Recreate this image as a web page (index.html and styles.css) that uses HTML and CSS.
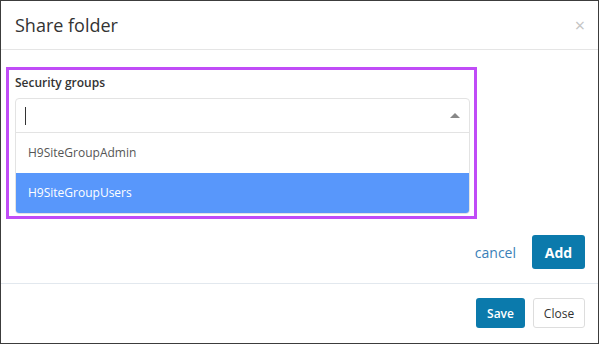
FILE: index.html
```html
<!DOCTYPE html>
<html lang="en">
<head>
    <meta charset="UTF-8">
    <title>Share folder</title>
    <link rel="stylesheet" href="styles.css">
</head>
<body>
    <div class="modal">
        <div class="modal-header">
            <h4 class="modal-title">Share folder</h4>
            <span class="close">&times;</span>
        </div>

        <div class="modal-body">
            <div class="destaque">
                <label class="rotulo">Security groups</label>
                <div class="select-box">
                    <div class="select-input">
                        <span class="cursor"></span>
                        <span class="seta"></span>
                    </div>
                    <ul class="opcoes">
                        <li>H9SiteGroupAdmin</li>
                        <li class="ativo">H9SiteGroupUsers</li>
                    </ul>
                </div>
            </div>
            <div class="acoes">
                <a href="#" class="link-cancel">cancel</a>
                <button class="btn btn-add">Add</button>
            </div>
        </div>

        <div class="modal-footer">
            <button class="btn btn-save">Save</button>
            <button class="btn btn-close">Close</button>
        </div>
    </div>
</body>
</html>
```
FILE: styles.css
```css
html, body {
    margin: 0;
    height: 100%;
}

body {
    font-family: "Open Sans", Arial, sans-serif;
    background-color: #fff;
    color: #333;
}

.modal {
    height: 100%;
    box-sizing: border-box;
    border: 1px solid #3c3c3c;
    display: flex;
    flex-direction: column;
}

.modal-header {
    height: 48px;
    border-bottom: 1px solid #e5e5e5;
    display: flex;
    align-items: center;
    justify-content: space-between;
    padding: 0 13px 0 14px;
}

.modal-title {
    margin: 0;
    font-size: 18px;
    font-weight: normal;
    color: #333;
}

.close {
    font-size: 18px;
    color: #c4c4c4;
    line-height: 1;
}

.modal-body {
    padding: 17px 13px 14px 5px;
    border-bottom: 1px solid #e2e8ee;
}

.destaque {
    width: 455px;
    height: 146px;
    border: 3px solid #c04cf7;
    padding: 0 4px 0 6px;
    box-sizing: content-box;
}

.rotulo {
    display: block;
    font-size: 12px;
    font-weight: 600;
    color: #333;
    margin-top: 4px;
    height: 24px;
}

.select-box {
    width: 455px;
    border: 1px solid #e3e3e3;
    border-radius: 4px;
    overflow: hidden;
    box-sizing: border-box;
}

.select-input {
    height: 33px;
    border-bottom: 1px solid #e3e3e3;
    display: flex;
    align-items: center;
    justify-content: space-between;
    padding: 0 9px 0 9px;
}

.cursor {
    width: 1px;
    height: 18px;
    background-color: #333;
}

.seta {
    width: 0;
    height: 0;
    border-left: 5px solid transparent;
    border-right: 5px solid transparent;
    border-bottom: 5px solid #888;
}

.opcoes {
    list-style: none;
    margin: 0;
    padding: 0;
}

.opcoes li {
    height: 40px;
    line-height: 40px;
    padding-left: 12px;
    font-size: 12px;
    color: #555;
}

.opcoes li.ativo {
    background-color: #5897fb;
    color: #fff;
}

.acoes {
    display: flex;
    justify-content: flex-end;
    align-items: center;
    margin-top: 16px;
}

.link-cancel {
    color: #3a7fb8;
    text-decoration: none;
    font-size: 14px;
    margin-right: 16px;
}

.btn {
    font-family: "Open Sans", Arial, sans-serif;
    border-radius: 3px;
    cursor: pointer;
}

.btn-add {
    width: 53px;
    height: 34px;
    background-color: #0b7aac;
    color: #fff;
    border: none;
    font-size: 14px;
    font-weight: bold;
}

.modal-footer {
    flex: 1;
    display: flex;
    justify-content: flex-end;
    align-items: flex-start;
    padding: 14px 13px 0 0;
    gap: 8px;
}

.btn-save {
    width: 49px;
    height: 30px;
    background-color: #0b7aac;
    color: #fff;
    border: none;
    font-size: 12px;
    font-weight: 600;
}

.btn-close {
    width: 52px;
    height: 30px;
    background-color: #fff;
    color: #333;
    border: 1px solid #ddd;
    font-size: 12px;
}
```
